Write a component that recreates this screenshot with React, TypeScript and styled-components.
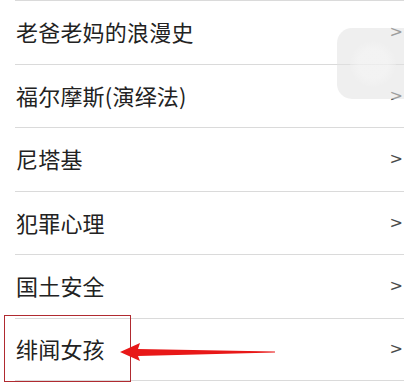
import React from "react";
import styled, { createGlobalStyle } from "styled-components";

const Global = createGlobalStyle`
  html, body { margin: 0; padding: 0; background: #fff; }
  body { font-family: "Noto Sans CJK SC", "Noto Sans", sans-serif; overflow: hidden; }
`;

const Page = styled.div`
  position: relative;
  width: 404px;
  height: 387px;
  overflow: hidden;
  background: #fff;
`;

const List = styled.ul`
  list-style: none;
  margin: 0;
  padding: 0;
`;

const Row = styled.li`
  box-sizing: border-box;
  margin-left: 15px;
  height: 63.5px;
  border-top: 1px solid #dadada;
  display: flex;
  align-items: center;
  justify-content: space-between;
  padding: 0 1px 2px 1px;
  &:last-child { border-bottom: 1px solid #dadada; }
`;

const Title = styled.span`
  font-size: 22px;
  color: #222;
  letter-spacing: 0.2px;
  line-height: 1;
`;

const Chevron = styled.span`
  font-family: "DejaVu Sans", sans-serif;
  font-size: 16px;
  color: #4a4a4a;
  line-height: 1;
  margin-top: 2px;
`;

const FloatButton = styled.div`
  position: absolute;
  left: 337px;
  top: 28px;
  width: 84px;
  height: 71px;
  border-radius: 15px;
  background: rgba(226, 226, 226, 0.55);
  display: flex;
  align-items: center;
  justify-content: center;
`;

const FloatInner = styled.div`
  width: 46px;
  height: 46px;
  border-radius: 50%;
  margin-left: -12px;
  background: radial-gradient(circle, rgba(246,246,246,0.55) 45%, rgba(238,238,238,0.3) 75%, rgba(230,230,230,0) 100%);
`;

const Highlight = styled.div`
  position: absolute;
  left: 4px;
  top: 315px;
  width: 127px;
  height: 67px;
  box-sizing: border-box;
  border: 1px solid #b02a30;
`;

const Arrow = styled.svg`
  position: absolute;
  left: 118px;
  top: 340px;
`;

const items = ["老爸老妈的浪漫史", "福尔摩斯(演绎法)", "尼塔基", "犯罪心理", "国土安全", "绯闻女孩"];

export default function App() {
  return (
    <Page>
      <Global />
      <List>
        {items.map((t) => (
          <Row key={t}>
            <Title>{t}</Title>
            <Chevron>&gt;</Chevron>
          </Row>
        ))}
      </List>
      <FloatButton>
        <FloatInner />
      </FloatButton>
      <Highlight />
      <Arrow width="160" height="24" viewBox="0 0 160 24">
        <path d="M2 12 L22 3 L20 9 L157 11.5 L157 12.5 L20 16 L22 21 Z" fill="#e81818" />
      </Arrow>
    </Page>
  );
}
